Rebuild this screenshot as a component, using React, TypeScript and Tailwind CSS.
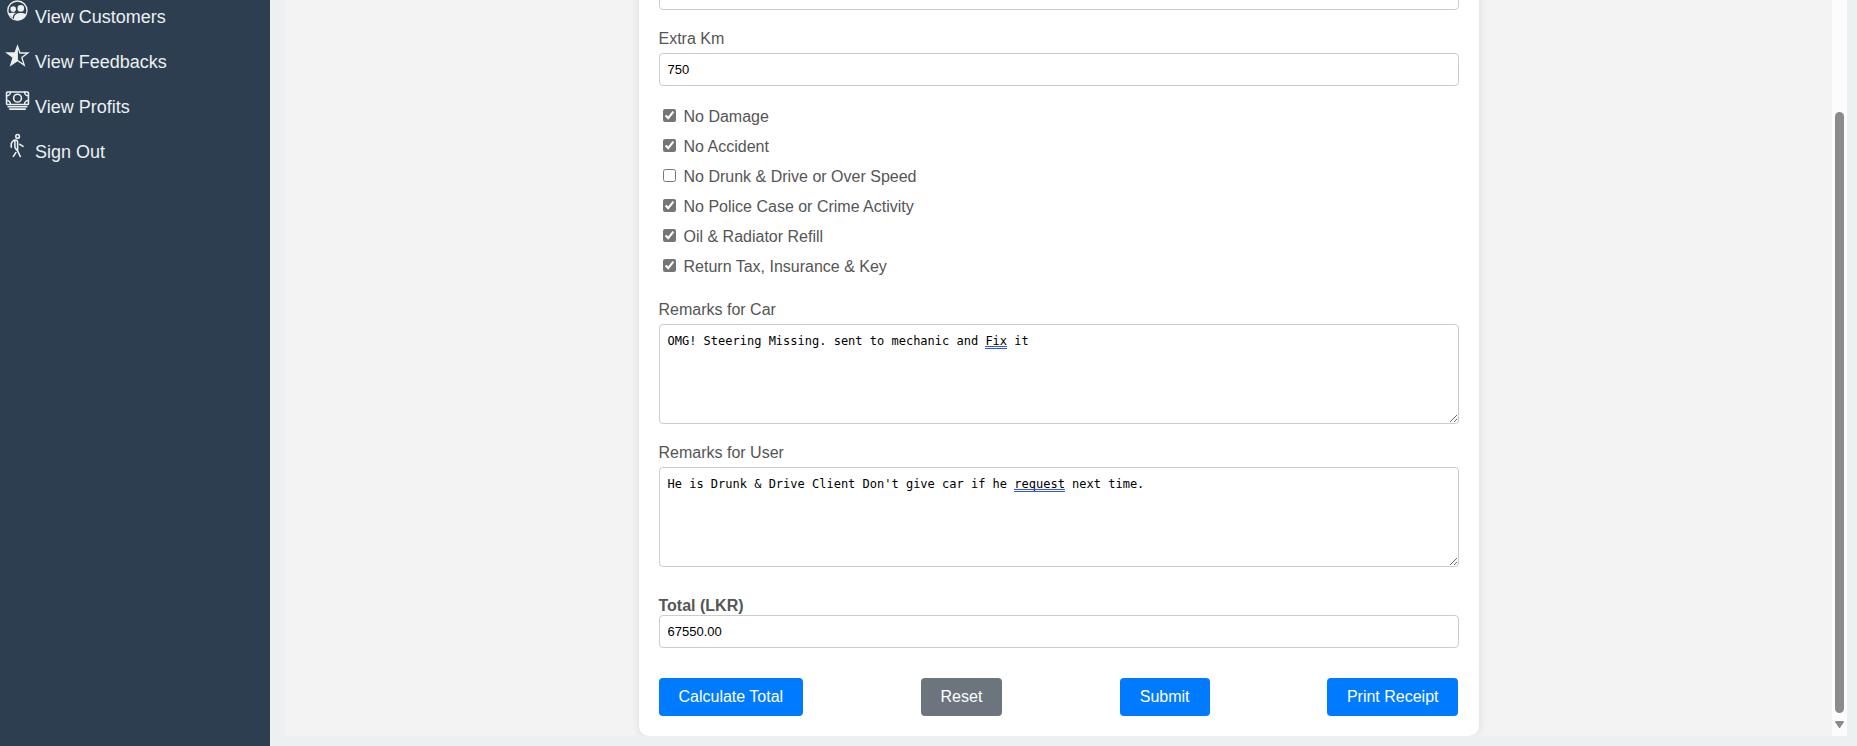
import { useState } from "react";
import type { ReactNode } from "react";
import { IoCashOutline, IoWalkOutline } from "react-icons/io5";

function CustomersIcon() {
  return (
    <svg viewBox="0 0 25 25" className="size-[25px]" fill="currentColor">
      <circle cx="12.4" cy="12.6" r="9.6" fill="none" stroke="currentColor" strokeWidth="1.3" />
      <circle cx="8.2" cy="11.1" r="2.8" />
      <circle cx="15.8" cy="10.4" r="3.3" />
      <path d="M3.4 15.6c1.5-.8 5-1 7.6-.5-2 .8-3 2-3.2 4.600C5.500 18.800 4 17.200 3.400 15.600Z" />
      <path d="M9 20.800c-.2-3.800 2.500-5.700 6.800-5.700 2.800 0 4.800.6 5.700 1.600-1.500 3.300-5 5.600-9 5.600-1.300 0-2.500-.5-3.500-1.500Z" />
    </svg>
  );
}

function HalfStarIcon() {
  return (
    <svg viewBox="0 0 25 25" className="size-[25px]" fill="currentColor">
      <path
        d="M12.500 3.200 15 10h7.900l-6.100 4.500 2.400 7.600-6.700-4.600-6.700 4.600 2.400-7.600L2.100 10H10Z"
        fill="none"
        stroke="currentColor"
        strokeWidth="1.300"
      />
      <path d="M12.900 3v14.700l-7.100 4.400 2.400-7.600L2.100 10H10Z" />
    </svg>
  );
}

const links: { label: string; icon: ReactNode }[] = [
  { label: "View Customers", icon: <CustomersIcon /> },
  { label: "View Feedbacks", icon: <HalfStarIcon /> },
  { label: "View Profits", icon: <IoCashOutline size={25} /> },
  { label: "Sign Out", icon: <IoWalkOutline size={25} /> },
];

const checks = [
  { label: "No Damage", checked: true },
  { label: "No Accident", checked: true },
  { label: "No Drunk & Drive or Over Speed", checked: false },
  { label: "No Police Case or Crime Activity", checked: true },
  { label: "Oil & Radiator Refill", checked: true },
  { label: "Return Tax, Insurance & Key", checked: true },
];

const inputClass =
  "block w-full rounded border border-[#ccc] bg-white p-2 text-[13px] leading-[15px] text-black outline-none";

function Remarks({ id, label, text, mark }: { id: string; label: string; text: string; mark: string }) {
  const [value, setValue] = useState(text);
  const start = value.indexOf(mark);
  return (
    <div>
      <label htmlFor={id} className="mb-[5px] block">
        {label}
      </label>
      <div className="relative font-['DejaVu_Sans_Mono',monospace] text-xs leading-4 text-black">
        <textarea
          id={id}
          value={value}
          spellCheck={false}
          onChange={(e) => setValue(e.target.value)}
          className="block h-[100px] w-full resize-y rounded border border-[#ccc] bg-white p-2 outline-none"
        />
        {start >= 0 && (
          <span
            aria-hidden="true"
            className="pointer-events-none absolute left-[9px] top-[22px] h-[3px] border-y border-[#3355f0]"
            style={{ marginLeft: `${start}ch`, width: `${mark.length}ch` }}
          />
        )}
      </div>
    </div>
  );
}

function Button({ children, gray, type = "button" }: { children: ReactNode; gray?: boolean; type?: "button" | "submit" | "reset" }) {
  return (
    <button
      type={type}
      className={`rounded px-5 py-2.5 text-base leading-[18px] text-white ${gray ? "bg-[#6c757d]" : "bg-[#007bff]"}`}
    >
      {children}
    </button>
  );
}

export default function App() {
  return (
    <div className="flex h-screen overflow-hidden bg-[#ecf0f1] font-['Liberation_Sans',Arial,sans-serif]">
      <nav className="flex w-[270px] shrink-0 flex-col bg-[#2c3e50] pl-[5px] text-lg leading-5 text-[#ecf0f1]">
        <ul className="-mt-0.5">
          {links.map((l) => (
            <li key={l.label} className="h-[45px]">
              <a href="#" className="flex items-start gap-[5px]">
                {l.icon}
                <span className="pt-[9px]">{l.label}</span>
              </a>
            </li>
          ))}
        </ul>
      </nav>

      <div className="mb-2.5 ml-[15px] mr-2.5 flex min-w-0 flex-1">
        <main className="flex flex-1 items-end justify-center overflow-hidden bg-[#f3f3f3]">
          <form
            onSubmit={(e) => e.preventDefault()}
            className="w-full max-w-[840px] rounded-[10px] bg-white p-5 text-base leading-[18px] text-[#555] shadow-[0_0_10px_rgba(0,0,0,0.1)]"
          >
            <input aria-label="Extra Days" className={inputClass} />

            <div className="mt-5">
              <label htmlFor="km" className="mb-[5px] block">
                Extra Km
              </label>
              <input id="km" defaultValue="750" className={inputClass} />
            </div>

            <div className="mb-[25px] mt-[22px] flex flex-col gap-3">
              {checks.map((c) => (
                <label key={c.label} className="flex items-start gap-2 pl-1">
                  <input type="checkbox" defaultChecked={c.checked} className="mt-px size-[13px] accent-[#767676]" />
                  {c.label}
                </label>
              ))}
            </div>

            <div className="flex flex-col gap-5">
              <Remarks id="car" label="Remarks for Car" text="OMG! Steering Missing. sent to mechanic and Fix it" mark="Fix" />
              <Remarks
                id="user"
                label="Remarks for User"
                text="He is Drunk & Drive Client Don't give car if he request next time."
                mark="request"
              />
            </div>

            <div className="mt-[30px]">
              <label htmlFor="total" className="block font-bold">
                Total (LKR)
              </label>
              <input id="total" defaultValue="67550.00" className={inputClass} />
            </div>

            <div className="mt-[30px] flex justify-between">
              <Button>Calculate Total</Button>
              <Button gray type="reset">
                Reset
              </Button>
              <Button type="submit">Submit</Button>
              <Button>Print Receipt</Button>
            </div>
          </form>
        </main>

        <div aria-hidden="true" className="flex w-[15px] shrink-0 flex-col items-center bg-[#fcfcfc] pb-2 pt-28">
          <div className="w-[9px] flex-1 rounded-full bg-[#8b8b8b]" />
          <svg viewBox="0 0 9 7" className="mt-2 h-[7px] w-[9px]" fill="#8b8b8b">
            <path d="M.7 0h7.6q.9.3.5 1.2L5.3 6.4q-.8 1-1.6 0L.2 1.2Q-.2.3.7 0Z" />
          </svg>
        </div>
      </div>
    </div>
  );
}
